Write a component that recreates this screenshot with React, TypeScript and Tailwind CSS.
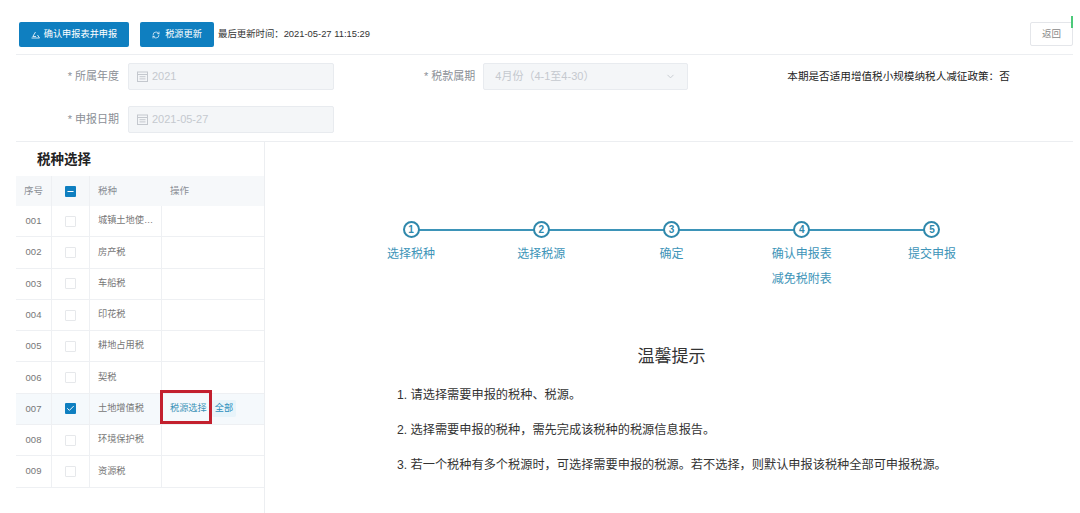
import React from "react";
import { RefreshCw, ChevronDown, Check, Minus } from "lucide-react";

const font = "font-['Liberation_Sans','Noto_Sans_CJK_SC',sans-serif]";

function Cal() {
  return (
    <svg width="11" height="11" viewBox="0 0 11 11" fill="none" stroke="#c4c8ce" strokeWidth="1" className="shrink-0">
      <rect x="0.5" y="1" width="10" height="9.5" />
      <path d="M0.5 3.5H10.5M2.5 5.7H8.5M2.5 7.9H8.5" />
    </svg>
  );
}

function DateField({ label, value }: { label: string; value: string }) {
  return (
    <div className="flex items-center h-[27px]">
      <div className="w-[103px] text-right text-[11px] text-[#8b8f96] pr-[9px]">* {label}</div>
      <div className="w-[206px] h-[27px] flex items-center gap-[4px] pl-[8px] bg-[#f4f6f8] border border-[#e8ebef] rounded-[2px] text-[11px] text-[#c5c9cf]">
        <Cal />
        <span>{value}</span>
      </div>
    </div>
  );
}

const rows = ["城镇土地使…", "房产税", "车船税", "印花税", "耕地占用税", "契税", "土地增值税", "环境保护税", "资源税"];
const steps = ["选择税种", "选择税源", "确定", "确认申报表", "提交申报"];
const tips = [
  "1. 请选择需要申报的税种、税源。",
  "2. 选择需要申报的税种，需先完成该税种的税源信息报告。",
  "3. 若一个税种有多个税源时，可选择需要申报的税源。若不选择，则默认申报该税种全部可申报税源。",
];

function Box({ state }: { state: "none" | "check" | "minus" }) {
  if (state === "none") return <span className="block w-[11px] h-[11px] border border-[#e6e8eb] rounded-[1px] bg-white" />;
  return (
    <span className="flex items-center justify-center w-[11px] h-[11px] rounded-[1px] bg-[#0f7fc0]">
      {state === "check" ? <Check size={9} color="#fff" strokeWidth={2.5} /> : <Minus size={9} color="#fff" strokeWidth={3} />}
    </span>
  );
}

export default function App() {
  return (
    <div className={`${font} relative w-[1080px] h-[513px] overflow-hidden bg-white pl-[16px] pr-[7px]`}>
      <div className="absolute left-[1071px] top-[16px] w-[2px] h-[12px] bg-[#4cc97a]" />

      {/* toolbar */}
      <div className="h-[55px] border-b border-[#eceef1] flex items-start pt-[22px] pl-[3px]">
        <button className="w-[110px] h-[25px] rounded-[2px] bg-[#0f7fc0] text-white text-[9.2px] flex items-center justify-center gap-[4px]">
          <svg width="9" height="8" viewBox="0 0 9 8" fill="none" stroke="#fff" strokeWidth="0.8">
            <path d="M0.5 7H8.5L6.5 4M4.5 1L1.8 5.5H5" />
          </svg>
          确认申报表并申报
        </button>
        <button className="ml-[11px] w-[74px] h-[25px] rounded-[2px] bg-[#0f7fc0] text-white text-[9.2px] flex items-center justify-center gap-[5px]">
          <RefreshCw size={8} color="#fff" />
          税源更新
        </button>
        <span className="ml-[4px] h-[25px] leading-[24px] text-[9.4px] text-[#333]">最后更新时间：2021-05-27 11:15:29</span>
        <button className="ml-auto w-[43px] h-[24px] border border-[#e4e6ea] rounded-[2px] text-[9.5px] text-[#888]">返回</button>
      </div>

      {/* form */}
      <div className="h-[87px] border-b border-[#eceef1] pt-[8px] flex flex-col gap-[16px] pl-[9px]">
        <div className="flex items-center">
          <DateField label="所属年度" value="2021" />
          <div className="ml-[90px] text-[11px] text-[#8b8f96] pr-[8px]">* 税款属期</div>
          <div className="w-[205px] h-[27px] flex items-center justify-between px-[11px] bg-[#f4f6f8] border border-[#e8ebef] rounded-[2px] text-[11px] text-[#c5c9cf]">
            <span>4月份（4-1至4-30）</span>
            <ChevronDown size={11} color="#c5c9cf" />
          </div>
          <div className="ml-[99px] text-[10.6px] text-[#222]">本期是否适用增值税小规模纳税人减征政策：否</div>
        </div>
        <DateField label="申报日期" value="2021-05-27" />
      </div>

      <div className="flex h-[371px]">
        {/* sidebar */}
        <div className="w-[249px] border-r border-[#eceef1] shrink-0">
          <div className="h-[34px] pl-[21px] pt-[9px] text-[13.5px] leading-[18px] font-bold text-[#222]">税种选择</div>
          <div className="flex h-[30px] items-center bg-[#f6f8fa] text-[9.5px] text-[#8b8f96]">
            <div className="w-[36px] text-center border-r border-[#eef0f3] h-full leading-[30px]">序号</div>
            <div className="w-[38px] flex justify-center items-center border-r border-[#eef0f3] h-full"><Box state="minus" /></div>
            <div className="w-[72px] pl-[8px]">税种</div>
            <div className="pl-[8px]">操作</div>
          </div>
          {rows.map((r, i) => (
            <div key={r} className={`flex h-[31.3px] items-center border-b border-[#eef0f3] text-[9.2px] text-[#777] ${i === 6 ? "bg-[#f5f9fc]" : ""}`}>
              <div className="w-[36px] text-[9.5px] text-center border-r border-[#eef0f3] h-full flex items-center justify-center">{String(i + 1).padStart(3, "0")}</div>
              <div className="w-[38px] flex justify-center items-center border-r border-[#eef0f3] h-full"><Box state={i === 6 ? "check" : "none"} /></div>
              <div className="w-[72px] pl-[8px] border-r border-[#eef0f3] h-full flex items-center">{r}</div>
              {i === 6 && (
                <div className="relative flex items-center pl-[8px] gap-[5px]">
                  <span className="text-[#3d94b8]">税源选择</span>
                  <span className="px-[3px] h-[17px] leading-[17px] bg-[#e8f4fa] rounded-[2px] text-[#2b8fbd]">全部</span>
                  <div className="absolute left-[-2px] top-[-10px] w-[52px] h-[34px] border-[3px] border-[#c3202e]" />
                </div>
              )}
            </div>
          ))}
        </div>

        {/* right */}
        <div className="flex-1 flex flex-col items-center">
          <div className="mt-[78px] ml-[5px] flex w-[651px] text-[12px] text-[#3d94b8]">
            {steps.map((s, i) => (
              <div key={s} className="relative flex-1 flex flex-col items-center">
                {i > 0 && <div className="absolute right-1/2 w-full top-[9px] h-[2px] bg-[#3d94b8]" />}
                <div className="relative z-10 w-[17px] h-[17px] rounded-full border-[2px] border-[#2f88ab] bg-white flex items-center justify-center text-[10px] font-bold leading-none text-[#2f88ab] mt-[1px]">{i + 1}</div>
                <div className="mt-[7px] leading-[18px]">{s}</div>
                {i === 3 && <div className="mt-[7px] leading-[18px]">减免税附表</div>}
              </div>
            ))}
          </div>
          <div className="mt-[57px] ml-[5px] text-[17px] leading-[24px] text-[#333]">温馨提示</div>
          <div className="self-start ml-[132px] mt-[18px] flex flex-col gap-[18px] text-[12.2px] leading-[17px] text-[#333]">
            {tips.map((t) => <div key={t}>{t}</div>)}
          </div>
        </div>
      </div>
    </div>
  );
}
